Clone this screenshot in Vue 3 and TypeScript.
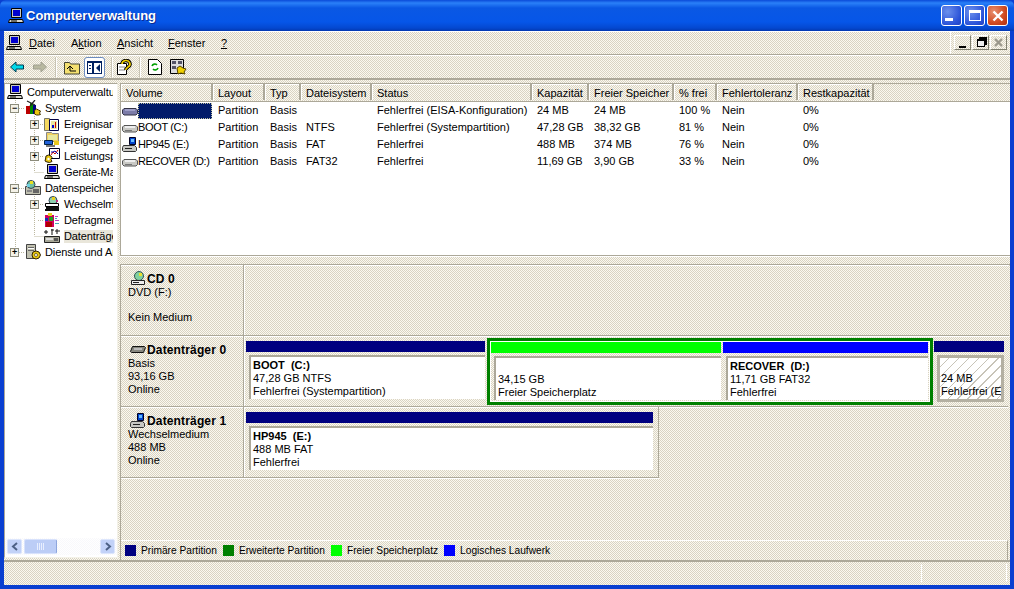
<script setup lang="ts">
interface TreeRow { label: string; icon: string; level: number; exp?: string; sel?: boolean }
const tree: TreeRow[] = [
  { label: 'Computerverwaltung', icon: 'pc', level: 0 },
  { label: 'System', icon: 'tools', level: 1, exp: '−' },
  { label: 'Ereignisanzeige', icon: 'event', level: 2, exp: '+' },
  { label: 'Freigegebene Ordner', icon: 'share', level: 2, exp: '+' },
  { label: 'Leistungsprotokolle', icon: 'perf', level: 2, exp: '+' },
  { label: 'Geräte-Manager', icon: 'pc', level: 2 },
  { label: 'Datenspeicher', icon: 'store', level: 1, exp: '−' },
  { label: 'Wechselmedien', icon: 'media', level: 2, exp: '+' },
  { label: 'Defragmentierung', icon: 'defrag', level: 2 },
  { label: 'Datenträgerverwaltung', icon: 'disk', level: 2, sel: true },
  { label: 'Dienste und Anwendungen', icon: 'svc', level: 1, exp: '+' },
]
const cols = [
  { t: 'Volume', w: 92 }, { t: 'Layout', w: 52 }, { t: 'Typ', w: 36 }, { t: 'Dateisystem', w: 71 },
  { t: 'Status', w: 160 }, { t: 'Kapazität', w: 57 }, { t: 'Freier Speicher', w: 85 }, { t: '% frei', w: 43 },
  { t: 'Fehlertoleranz', w: 81 }, { t: 'Restkapazität', w: 76 },
]
const gridCols = cols.map(c => c.w + 'px').join(' ')
const rows = [
  { icon: 'hddb', v: '', c: ['Partition', 'Basis', '', 'Fehlerfrei (EISA-Konfiguration)', '24 MB', '24 MB', '100 %', 'Nein', '0%'], sel: true },
  { icon: 'hdd', v: 'BOOT (C:)', c: ['Partition', 'Basis', 'NTFS', 'Fehlerfrei (Systempartition)', '47,28 GB', '38,32 GB', '81 %', 'Nein', '0%'] },
  { icon: 'usb', v: 'HP945 (E:)', c: ['Partition', 'Basis', 'FAT', 'Fehlerfrei', '488 MB', '374 MB', '76 %', 'Nein', '0%'] },
  { icon: 'hdd', v: 'RECOVER (D:)', c: ['Partition', 'Basis', 'FAT32', 'Fehlerfrei', '11,69 GB', '3,90 GB', '33 %', 'Nein', '0%'] },
]
const legend = [
  { c: '#000080', t: 'Primäre Partition' }, { c: '#008000', t: 'Erweiterte Partition' },
  { c: '#00ff00', t: 'Freier Speicherplatz' }, { c: '#0000ff', t: 'Logisches Laufwerk' },
]
</script>

<template>
  <div class="win">
    <svg class="defs" width="0" height="0">
      <symbol id="pc" viewBox="0 0 16 16"><path fill="#c8c8c0" stroke="#000" d="M3.500 .5h10v9h-10z"/><path fill="#0000d0" d="M5 2h7v6H5z"/><path fill="#d8d8d0" stroke="#000" d="M1.500 11.500h13l1 3h-15z"/><path stroke="#000" d="M3 13h6"/></symbol>
      <symbol id="hdd" viewBox="0 0 16 16"><path fill="#c8c8c4" stroke="#555" d="M2 5.500h12l1.500 1.500v3.500l-1.500 1.500H2L.5 10.500V7z"/><path fill="#eee" d="M3 6h10v2H3z"/><path fill="#777" d="M3 10h7v1H3z"/></symbol>
      <symbol id="hddb" viewBox="0 0 16 16"><path fill="#7c7ca8" stroke="#334" d="M2 5.500h12l1.500 1.500v3.500l-1.500 1.500H2L.5 10.500V7z"/><path fill="#a0a0c8" d="M3 6h10v2H3z"/></symbol>
      <symbol id="usb" viewBox="0 0 16 16"><path fill="#c8c8c4" stroke="#333" d="M1.500 8.500h11l2 2v3l-1 1h-12l-1-1v-3z"/><path fill="#0044cc" stroke="#002" d="M7.500 .5h6v7h-6z"/><path fill="#66bbff" d="M9 2h3v3H9z"/><path fill="#222" d="M3 11h7v1H3z"/></symbol>
      <symbol id="tools" viewBox="0 0 16 16"><path fill="#b00" d="M1 6h4v8H1z"/><path fill="#080" d="M5 3h3v11H5z"/><path fill="#008" d="M8 5h3v9H8z"/><path stroke="#222" stroke-width="1.200" fill="none" d="M2 1l8 4M10 0L5 6"/><path fill="#ecc810" stroke="#430" d="M9.500 10.500l2-1.500 2 1 2 1-1 2 1 1.500-2 .5-2 0-2-1z"/></symbol>
      <symbol id="event" viewBox="0 0 16 16"><path fill="#f4d860" stroke="#776" d="M.5 2.500h5l1 1h7v11H.5z"/><path fill="#fff" stroke="#004" d="M5.500 3.500h9v11h-9z"/><path fill="#e8e4a0" d="M7 5h6v8H7z"/><path fill="#c00" d="M11 6h1v6h-1z"/><path fill="#00c" d="M8 9h2v3H8z"/></symbol>
      <symbol id="share" viewBox="0 0 16 16"><path fill="#f0d060" stroke="#888" d="M2.500 .5h5l1 1h6v8h-12z"/><path fill="#e8e8a0" d="M4 3h9v5H4z"/><path fill="#2060d8" stroke="#024" d="M.5 8.500h8v4h-8z"/><path fill="#777" d="M2 13h9v2H2z"/><path fill="#e8c820" d="M10 9h5v4h-5z"/></symbol>
      <symbol id="perf" viewBox="0 0 16 16"><path fill="#fff" stroke="#002" d="M5.500 .5h10v10h-10z"/><path fill="none" stroke="#c00" d="M7 7l2-3 2 2 3-4"/><path fill="none" stroke="#00a" d="M7 4h2l2-1 3 3"/><path fill="#e8c810" stroke="#320" d="M2 8l2.500-1 2.500 1 1 1.500-1 2 1 2-2.500 1-2.500-.5-2-1 .5-2z"/><circle cx="4.500" cy="11" r="1.200" fill="#fff"/></symbol>
      <symbol id="store" viewBox="0 0 16 16"><path fill="#c0c0b0" stroke="#444" d="M.5 6.500h15v8H.5z"/><circle cx="6" cy="4.500" r="4" fill="#70c0a0" stroke="#345"/><path fill="#e8e020" d="M5 1h3v3H5z"/><path fill="#70d0e0" d="M2 4h3v3H2z"/><path fill="#666" d="M8 9h6v4H8z"/><path fill="#888" d="M2 10h5v2H2z"/></symbol>
      <symbol id="media" viewBox="0 0 16 16"><circle cx="9" cy="4.500" r="4" fill="#90d0b0" stroke="#345"/><path fill="#e8d020" d="M8 1h3v3H8z"/><path fill="#c03080" d="M12 4h2v2h-2z"/><path fill="#fff" stroke="#000" d="M1.500 7.500h13v3h-13z"/><path fill="#111" d="M2 11h13v2H2zM1 13h14v2H1z"/></symbol>
      <symbol id="defrag" viewBox="0 0 16 16"><path fill="#d00060" d="M1 3h9v12H1z"/><path fill="#b00000" d="M2 10h6v5H2z"/><path fill="#20a020" d="M5 5h4v4H5z"/><path fill="#e8d020" d="M4 1h4v3H4z"/><path fill="#1030b0" d="M1 6h3v3H1z"/><path fill="#c040c0" d="M11 4h3v1h-3zM11 8h4v1h-4z"/><path fill="#40b0b0" d="M11 6h2v1h-2zM11 11h4v1h-4z"/></symbol>
      <symbol id="disk" viewBox="0 0 16 16"><path fill="#a8a898" stroke="#222" d="M.5 8.500h15v6H.5z"/><path fill="#ddd" d="M2 10h7v2H2z"/><path fill="#555" d="M10 10h4v3h-4z"/><path fill="none" stroke="#111" d="M2 2v4M0 4h4M8 1v6M10 2h-3M13 1v5M11 3h5"/></symbol>
      <symbol id="svc" viewBox="0 0 16 16"><path fill="#c0c0b0" stroke="#444" d="M1.500 .5h9v14h-9z"/><path fill="#666" d="M3 3h6v1H3zM3 6h6v1H3z"/><path fill="#fff" d="M3 4h6v1H3z"/><path fill="#e8c810" stroke="#320" d="M8 8l3-1 3 1 1.500 3-1.500 3-3 1-3-1-1-3z"/><circle cx="11" cy="11" r="1.500" fill="#fff" stroke="#320" stroke-width=".6"/></symbol>
      <symbol id="cdd" viewBox="0 0 16 16"><circle cx="9" cy="5" r="4.500" fill="#80d0a0" stroke="#355"/><path fill="#e8e030" d="M9 2h3v3H9z"/><path fill="#eee" stroke="#222" d="M1.500 9.500h13v4h-13z"/><path stroke="#222" d="M3 11.500h6"/></symbol>
      <symbol id="dd0" viewBox="0 0 16 16"><path fill="#888880" stroke="#111" d="M2.500 4.500h12l1 1-2 5H1.500l-1-1z"/><path fill="#bbb" d="M4 6h8v2H4z"/></symbol>
    </svg>

    <header class="title">
      <svg class="ic"><use href="#pc" /></svg>
      <span class="title-text">Computerverwaltung</span>
      <div class="wbtns">
        <span class="wbtn"><i class="g-min"></i></span>
        <span class="wbtn"><i class="g-max"></i></span>
        <span class="wbtn close">
          <svg width="12" height="12" viewBox="0 0 12 12"><path d="M1.500 1.500l9 9M10.500 1.500l-9 9" stroke="#fff" stroke-width="2.400" /></svg>
        </span>
      </div>
    </header>

    <div class="client">
      <div class="menubar">
        <svg class="ic mico"><use href="#pc" /></svg>
        <span class="mi" style="width:42px"><u>D</u>atei</span>
        <span class="mi" style="width:46px">A<u>k</u>tion</span>
        <span class="mi" style="width:51px"><u>A</u>nsicht</span>
        <span class="mi" style="width:53px"><u>F</u>enster</span>
        <span class="mi"><u>?</u></span>
        <div class="mdi">
          <span class="mb"><i class="m-min"></i></span>
          <span class="mb"><i class="m-res"></i></span>
          <span class="mb dis">
            <svg width="9" height="9" viewBox="0 0 9 9"><path d="M1 1l7 7M8 1L1 8" stroke="#99968a" stroke-width="2" /></svg>
          </span>
        </div>
      </div>

      <div class="toolbar">
        <svg class="tb" style="margin-left:6px" width="14" height="12" viewBox="0 0 14 12"><path d="M.5 6L6 1v3h7.500v4H6v3z" fill="#00d8e8" stroke="#003c50" /></svg>
        <svg class="tb" style="margin-left:9px" width="14" height="12" viewBox="0 0 14 12"><path d="M13.500 6L8 1v3H.5v4H8v3z" fill="#b8b8a0" stroke="#a0a090" /></svg>
        <span class="tsep" style="margin-left:8px"></span>
        <svg class="tb" style="margin-left:8px" width="16" height="15" viewBox="0 0 16 15"><path d="M.5 2.500h5l1 1.500h9v10H.5z" fill="#f4e070" stroke="#443" /><path d="M3 9l3-3 3 3M6 7v4h6" fill="none" stroke="#000" /></svg>
        <span class="tbtn">
          <svg width="15" height="13" viewBox="0 0 15 13"><path fill="#002060" d="M0 0h15v13H0z"/><path fill="#fff" d="M1 2h4v10H1zM7 2h7v10H7z"/><path fill="#002060" d="M2 4h2v1H2zM2 7h2v1H2zM13 3v8L9 7z"/></svg>
        </span>
        <span class="tsep" style="margin-left:6px"></span>
        <svg class="tb" style="margin-left:5px" width="15" height="16" viewBox="0 0 15 16"><path d="M.5 4.500h9v11h-9z" fill="#fff" stroke="#000"/><path d="M2 8h6M2 11h6" stroke="#888"/><path d="M5 5a4 3.500 0 1 1 6 3l-2 2v1" fill="none" stroke="#000" stroke-width="3.400"/><path d="M5 5a4 3.500 0 1 1 6 3l-2 2v1" fill="none" stroke="#f0d000" stroke-width="1.600"/></svg>
        <span class="tsep" style="margin-left:7px"></span>
        <svg class="tb" style="margin-left:8px" width="14" height="16" viewBox="0 0 14 16"><path d="M.5 .5h9l4 4v11H.5z" fill="#fff" stroke="#000"/><path d="M4 7a3 3 0 0 1 5-1M10 9a3 3 0 0 1-5 1" fill="none" stroke="#00a000" stroke-width="1.600"/></svg>
        <svg class="tb" style="margin-left:8px" width="17" height="16" viewBox="0 0 17 16"><path d="M.5 .5h13v14H.5z" fill="#ddd" stroke="#000"/><path d="M2 2h4v3H2zM8 2h4v3H8zM2 7h4v3H2z" fill="#556"/><path d="M7 9l3-2 3 2 3 1-2 3 1 2-4-1-3 1z" fill="#f0d000" stroke="#540"/></svg>
      </div>

      <div class="main">
        <aside class="treepane">
          <div class="treelist">
            <svg class="treelines" width="110" height="170">
              <path stroke="#bcb8a0" stroke-dasharray="1 1" fill="none" d="M15.500 16v152M19 24.500h6M19 104.500h6M19 168.500h6M34.500 32v56M38 40.500h6M38 56.500h6M38 72.500h6M34.500 88.500h9.500M34.500 112v40M38 120.500h6M38 136.500h6M34.500 152.500h9.500" />
            </svg>
            <div v-for="r in tree" :key="r.label" class="trow" :class="'lv' + r.level">
              <span v-if="r.exp" class="exp">{{ r.exp }}</span>
              <svg class="ic"><use :href="'#' + r.icon" /></svg>
              <span class="tlabel" :class="{ tsel: r.sel }">{{ r.label }}</span>
            </div>
          </div>
          <div class="hscroll">
            <span class="sb"><svg width="8" height="9" viewBox="0 0 8 9"><path d="M6 1L2 4.500 6 8" fill="none" stroke="#4d6185" stroke-width="2"/></svg></span>
            <span class="thumb"><i></i><i></i><i></i><i></i></span>
            <span class="sb end"><svg width="8" height="9" viewBox="0 0 8 9"><path d="M2 1l4 3.500L2 8" fill="none" stroke="#4d6185" stroke-width="2"/></svg></span>
          </div>
        </aside>

        <section class="right">
          <div class="list">
            <div class="lhead" :style="{ gridTemplateColumns: gridCols }">
              <span v-for="c in cols" :key="c.t" class="lh">{{ c.t }}</span>
            </div>
            <div v-for="(r, i) in rows" :key="i" class="lrow" :style="{ gridTemplateColumns: gridCols }">
              <span class="vol">
                <svg class="ic"><use :href="'#' + r.icon" /></svg>
                <span class="voltext" :class="{ volsel: r.sel }">{{ r.v }}</span>
              </span>
              <span v-for="(c, j) in r.c" :key="j" class="cell">{{ c }}</span>
            </div>
          </div>

          <div class="splitter"></div>

          <div class="disks">
            <div class="drow cd">
              <div class="dlabel">
                <div class="dname"><svg class="ic"><use href="#cdd" /></svg><b>CD 0</b></div>
                <div>DVD (F:)</div>
                <div class="blank">&nbsp;</div>
                <div>Kein Medium</div>
              </div>
              <div class="dparts"></div>
            </div>

            <div class="drow d0">
              <div class="dlabel">
                <div class="dname"><svg class="ic"><use href="#dd0" /></svg><b>Datenträger 0</b></div>
                <div>Basis</div>
                <div>93,16 GB</div>
                <div>Online</div>
              </div>
              <div class="dparts">
                <div class="part" style="width:239px">
                  <div class="bar navy"></div>
                  <div class="pbox"><b>BOOT&nbsp; (C:)</b><span>47,28 GB NTFS</span><span>Fehlerfrei (Systempartition)</span></div>
                </div>
                <div class="ext">
                  <div class="part" style="width:230px">
                    <div class="bar lime"></div>
                    <div class="pbox"><b>&nbsp;</b><span>34,15 GB</span><span>Freier Speicherplatz</span></div>
                  </div>
                  <div class="part" style="width:205px">
                    <div class="bar blue"></div>
                    <div class="pbox"><b>RECOVER&nbsp; (D:)</b><span>11,71 GB FAT32</span><span>Fehlerfrei</span></div>
                  </div>
                </div>
                <div class="part" style="width:70px">
                  <div class="bar navy"></div>
                  <div class="pbox hatch"><b>&nbsp;</b><span>24 MB</span><span>Fehlerfrei (EISA-Konfiguration)</span></div>
                </div>
              </div>
            </div>

            <div class="drow d1">
              <div class="dlabel">
                <div class="dname"><svg class="ic"><use href="#usb" /></svg><b>Datenträger 1</b></div>
                <div>Wechselmedium</div>
                <div>488 MB</div>
                <div>Online</div>
              </div>
              <div class="dparts">
                <div class="part" style="width:407px">
                  <div class="bar navy"></div>
                  <div class="pbox"><b>HP945&nbsp; (E:)</b><span>488 MB FAT</span><span>Fehlerfrei</span></div>
                </div>
              </div>
            </div>

            <div class="spacer"></div>

            <div class="legend">
              <span v-for="l in legend" :key="l.t" class="lg">
                <i :style="{ background: l.c }"></i>{{ l.t }}
              </span>
            </div>
          </div>
        </section>
      </div>

      <footer class="status">
        <span class="st1"></span>
      </footer>
    </div>
  </div>
</template>

<style>
html, body { margin: 0; padding: 0; overflow: hidden; background: #fff; }
</style>

<style scoped>
.win {
  --dither: repeating-conic-gradient(#d9d3c3 0 25%, #fbf9f0 0 50%) 0 0 / 2px 2px;
  width: 1014px; height: 589px; box-sizing: border-box;
  display: flex; flex-direction: column;
  font: 11px/13px "Liberation Sans", Arial, sans-serif; color: #000;
  background: #0a3fd0; overflow: hidden;
}
.defs { position: absolute; }
.ic { width: 16px; height: 16px; flex: none; display: block; }

.title {
  height: 31px; flex: none; display: flex; align-items: center; padding: 0 6px 0 8px; box-sizing: border-box;
  background: linear-gradient(180deg, #0a4ad8 0, #2a80f8 3px, #0a58e4 8px, #0656e8 22px, #0448d0 28px, #0338b0 31px);
  border-radius: 6px 6px 0 0;
}
.title-text { margin-left: 2px; color: #fff; font-size: 13px; font-weight: 700; text-shadow: 1px 1px 0 #0a2a90; }
.wbtns { margin-left: auto; display: flex; gap: 2px; }
.wbtn {
  width: 21px; height: 21px; border: 1px solid #fff; border-radius: 3px; box-sizing: border-box; display: flex;
  align-items: center; justify-content: center;
  background: radial-gradient(circle at 30% 30%, #6c90ec, #2a52d8 70%, #2040c0);
}
.wbtn.close { background: radial-gradient(circle at 30% 30%, #e89070, #d04a20 60%, #b03010); }
.g-min { width: 8px; height: 3px; background: #fff; margin: 8px 5px 0 0; }
.g-max { border: 1px solid #fff; border-top-width: 3px; box-sizing: border-box; width: 12px; height: 11px; }

.client {
  flex: 1; margin: 0 4px 4px; display: flex; flex-direction: column; min-height: 0;
  background: var(--dither);
}
.menubar {
  height: 24px; flex: none; display: flex; align-items: center; padding: 2px 3px 0 2px; box-sizing: border-box;
  border-bottom: 1px solid #aca899; box-shadow: inset 0 1px 0 #fff;
}
.mico { margin-right: 7px; margin-top: -2px; }
.mi { display: inline-block; flex: none; }
.mdi { margin-left: auto; margin-top: -2px; display: flex; gap: 1px; border-left: 1px solid #fff; padding-left: 3px; height: 22px; align-items: center; }
.mb {
  width: 17px; height: 15px; display: flex; align-items: center; justify-content: center; box-sizing: border-box;
  background: var(--dither); border: 1px solid; border-color: #fff #808070 #808070 #fff;
}
.m-min { width: 7px; height: 2px; background: #000; margin-top: 8px; }
.m-res { width: 6px; height: 5px; border: 1px solid #000; border-top-width: 2px; box-shadow: 2px -2px 0 -1px #000, 2px -2px 0 0 #000; background: #eee; }
.toolbar {
  height: 25px; flex: none; display: flex; align-items: center; box-sizing: border-box;
  border-bottom: 2px solid #aca899; border-top: 1px solid #fff;
}
.tb { flex: none; display: block; }
.tsep { width: 1px; height: 20px; background: #c8c4b4; box-shadow: 1px 0 0 #fff; flex: none; }
.tbtn {
  margin-left: 4px; width: 21px; height: 21px; box-sizing: border-box; display: flex; align-items: center; justify-content: center;
  border: 1px solid #6c8cc0; border-radius: 3px; background: #fff; flex: none;
}

.main { flex: 1; min-height: 0; display: flex; padding-top: 3px; }
.treepane {
  width: 114px; flex: none; margin-right: 2px; display: flex; flex-direction: column; overflow: hidden; background: #fff;
  border: 1px solid; border-color: #aca899 #f4f2e8 #f4f2e8 #aca899; box-sizing: border-box; margin-bottom: 2px;
}
.treelist { flex: 1; position: relative; overflow: hidden; }
.treelines { position: absolute; left: -5px; top: 0; }
.trow { height: 16px; width: 108px; box-sizing: border-box; display: flex; align-items: center; position: relative; white-space: nowrap; overflow: hidden; letter-spacing: -.1px; }
.lv0 { padding-left: 2px; }
.lv0 .ic { margin-right: 4px; }
.lv1 { padding-left: 20px; }
.lv1 .ic { margin-right: 4px; }
.lv2 { padding-left: 39px; }
.lv2 .ic { margin-right: 4px; }
.exp {
  position: absolute; width: 9px; height: 9px; border: 1px solid #8c8c7c; box-sizing: border-box; background: #f4f2e8;
  font: 700 9px/7px "Liberation Sans", sans-serif; text-align: center; top: 4px;
}
.lv1 .exp { left: 5px; }
.lv2 .exp { left: 25px; }
.tsel { background: #e9e6da; }
.hscroll {
  height: 17px; flex: none; display: flex; align-items: center; padding: 0 2px;
  background: repeating-conic-gradient(#f8f8fb 0 25%, #ffffff 0 50%) 0 0 / 2px 2px; margin-bottom: 2px;
}
.sb {
  width: 15px; height: 15px; background: #c2d2f8; border: 1px solid #dde6fc; box-sizing: border-box; display: flex; align-items: center; justify-content: center; flex: none; border-radius: 2px;
}
.sb.end { margin-left: auto; }
.thumb {
  margin-left: 2px; width: 33px; height: 15px; background: #bccdf6; border: 1px solid #d8e2fc; border-right-color: #8ea6dd; box-sizing: border-box;
  display: flex; align-items: center; justify-content: center; gap: 1px; border-radius: 2px;
}
.thumb i { width: 1px; height: 7px; background: #e8eefe; }

.right { flex: 1; min-width: 0; display: flex; flex-direction: column; }
.list { height: 172px; flex: none; background: #fff; border-top: 1px solid #aca899; border-left: 1px solid #aca899; box-sizing: border-box; overflow: hidden; }
.lhead { display: grid; height: 17px; background: var(--dither); box-shadow: 0 1px 0 #aca899; justify-content: start; }
.lh {
  padding: 3px 0 0 5px; box-sizing: border-box; white-space: nowrap; overflow: hidden; height: 16px;
  border-right: 2px solid #aca899; box-shadow: inset 1px 1px 0 #fff;
}
.lrow { display: grid; height: 17px; align-items: center; justify-content: start; white-space: nowrap; }
.lhead + .lrow { margin-top: 1px; }
.vol { display: flex; align-items: center; padding-left: 1px; }
.voltext { letter-spacing: -.35px; }
.volsel { display: block; width: 74px; height: 16px; background: #001a6a; outline: 1px dotted #c0c0a0; outline-offset: -1px; }
.cell { padding-left: 5px; overflow: hidden; }

.splitter { height: 10px; flex: none; box-sizing: border-box; border-top: 1px solid #aca899; border-bottom: 1px solid #aca899; box-shadow: inset 0 1px 0 #fff; }
.disks { flex: 1; min-height: 0; display: flex; flex-direction: column; border-left: 1px solid #aca899; }
.drow { display: flex; flex: none; box-sizing: border-box; border-bottom: 1px solid #aca899; box-shadow: 0 1px 0 #fff, inset 0 1px 0 #fff; }
.cd { height: 71px; margin-right: 1px; }
.d0 { height: 71px; margin-right: 2px; }
.d1 { height: 71px; width: 538px; border-right: 1px solid #aca899; }
.dlabel { width: 123px; flex: none; padding: 7px 0 0 7px; box-sizing: border-box; border-right: 1px solid #aca899; box-shadow: 1px 0 0 #fff; line-height: 13px; }
.dname { display: flex; align-items: center; height: 14px; padding-left: 2px; }
.dname b { font-size: 12px; letter-spacing: .15px; margin-left: 1px; }
.dlabel > div:not(.dname) { height: 13px; }
.dlabel > .blank { height: 12px !important; }
.dparts { flex: 1; min-width: 0; display: flex; align-items: flex-start; padding: 5px 0 0 2px; }
.part { display: flex; flex-direction: column; flex: none; box-sizing: border-box; min-width: 0; }
.bar { height: 11px; flex: none; }
.navy { background: #000080; }
.lime { background: #00ff00; }
.blue { background: #0000ff; }
.pbox {
  margin: 3px 0 0 3px; height: 44px; box-sizing: border-box; padding: 2px 0 0 2px; background: #fff; overflow: hidden;
  border-top: 2px solid #aca899; border-left: 2px solid #aca899; display: flex; flex-direction: column; white-space: nowrap;
  line-height: 13px;
}
.pbox b, .pbox span { height: 13px; display: block; flex: none; }
.hatch {
  height: 47px; border: 3px solid #b4b0a2;
  background: repeating-linear-gradient(135deg, #fff 0 6px, #c8c4b8 6px 7px);
  padding: 1px 0 0 1px;
}
.ext {
  display: flex; gap: 2px; flex: none; box-sizing: border-box; margin: -3px 1px 0 2px;
  border: 3px solid #008000; height: 67px; box-shadow: inset 0 0 0 1px #fff; background: var(--dither);
  padding: 1px 2px 0 1px;
}
.spacer { flex: 1; }
.legend {
  height: 20px; flex: none; display: flex; align-items: center; padding-left: 4px; box-sizing: border-box; margin-right: 2px;
  border-top: 1px solid #fff; border-right: 1px solid #aca899; font-size: 10.2px;
}
.lg { display: flex; align-items: center; flex: none; white-space: nowrap; margin-right: 6px; }
.lg i { width: 11px; height: 11px; margin-right: 5px; display: block; }
.status {
  height: 25px; flex: none; display: flex; box-sizing: border-box; border-top: 2px solid #aca899; justify-content: flex-end;
}
.st1 { width: 84px; border-left: 1px solid #fff; border-right: 1px solid #fff; margin: 2px 3px 3px 0; }
</style>
